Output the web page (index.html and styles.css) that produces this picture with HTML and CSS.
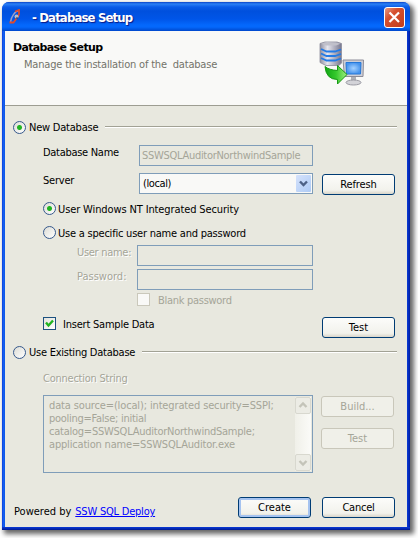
FILE: index.html
```html
<!DOCTYPE html>
<html lang="en">
<head>
<meta charset="utf-8">
<title>Database Setup</title>
<link rel="stylesheet" href="styles.css">
</head>
<body>
<main class="window">
  <header class="titlebar">
    <svg class="app-icon" width="14" height="16" viewBox="0 0 14 16"><path d="M1.500 13C2 8 6 2 10 1.500" fill="none" stroke="#9a9cc8" stroke-width="1.500"/><path d="M.5 13.500H4.500L7.500 9.500M6 2.500 10 1V5L8.500 8.500" fill="none" stroke="#e04a2c" stroke-width="1.800"/><circle cx="7.500" cy="7.500" r="2" fill="#b9bdc9"/><path d="M7 9h2" stroke="#333"/></svg>
    <h1>- Database Setup</h1>
    <button class="close" aria-label="Close"><svg width="21" height="21" viewBox="0 0 21 21"><path d="M5.500 5.500 15 15M15 5.500 5.500 15" stroke="#fff" stroke-width="2.200"/></svg></button>
  </header>
  <div class="client">
    <section class="banner">
      <div class="banner-text">
        <h2>Database Setup</h2>
        <p>Manage the installation of the&nbsp; database</p>
      </div>
      <svg class="banner-icon" width="46" height="46" viewBox="0 0 46 46">
        <defs>
          <linearGradient id="metal"><stop offset="0" stop-color="#8f8fa0"/><stop offset=".35" stop-color="#e6e6ee"/><stop offset="1" stop-color="#77778e"/></linearGradient>
          <linearGradient id="green"><stop offset="0" stop-color="#10a514"/><stop offset=".5" stop-color="#35c92c"/><stop offset="1" stop-color="#a2ee80"/></linearGradient>
          <radialGradient id="screen"><stop offset="0" stop-color="#a6d2ff"/><stop offset="1" stop-color="#4593ed"/></radialGradient>
        </defs>
        <path d="M1 2.500 6 1H18L22.500 2.500V22L20 24.500H7L1 21.500Z" fill="url(#metal)" stroke="#8b8b9b" stroke-width=".8"/>
        <path d="M2 2.800 7 1.500H17L21.500 2.800 17 4.500H7Z" fill="#c0c0ca"/>
        <path d="M2 8 7.500 10.500H16L22 8.500M2 12.500 7.500 15H16L22 13M2 17 7.500 19.500H16L22 17.500" fill="none" stroke="#247be5" stroke-width="1.800"/>
        <path d="M24 19H44.500L44 35.500H25.500Z" fill="#ceced6" stroke="#8d8d98"/>
        <path d="M27 21.500H42L41.500 33H27.500Z" fill="url(#screen)" stroke="#2678d8"/>
        <path d="M32 36h5v4h-5z" fill="#aeb0b6"/><ellipse cx="34.500" cy="41.500" rx="7.500" ry="2.500" fill="#d3d3d8" stroke="#9a9aa3"/>
        <path d="M6 25.500Q10 29 18.500 29.500V24.500L28 33.500 18.500 43V38.500Q7 38.500 6 25.500Z" fill="url(#green)" stroke="#179a14"/>
      </svg>
    </section>
    <form class="form">
      <div class="group-head">
        <i class="radio on"></i><span class="t-new">New Database</span><i class="rule"></i>
      </div>
      <div class="row name-row"><label class="t-name">Database Name</label><div class="field"><span class="t-sample">SSWSQLAuditorNorthwindSample</span></div></div>
      <div class="row server-row"><label class="t-server">Server</label><div class="field select"><span class="t-local">(local)</span><i class="drop"><svg width="15" height="17" viewBox="0 0 15 17"><path d="M4 6.500 7.500 10 11 6.500" fill="none" stroke="#4d6185" stroke-width="2.400"/></svg></i></div><button type="button" class="btn"><span class="t-refresh">Refresh</span></button></div>
      <div class="option nt"><i class="radio on"></i><span class="t-nt">User Windows NT Integrated Security</span></div>
      <div class="option specific"><i class="radio"></i><span class="t-specific">Use a specific user name and password</span></div>
      <div class="row cred user"><label class="t-user">User name:</label><div class="field"></div></div>
      <div class="row cred pass"><label class="t-pass">Password:</label><div class="field"></div></div>
      <div class="blank"><i class="check off"></i><span class="t-blank">Blank password</span></div>
      <div class="row insert"><i class="check"><svg width="11" height="11" viewBox="0 0 11 11"><path d="M2 4.500 4.500 7.500 9 2.500" fill="none" stroke="#21b421" stroke-width="2.400"/></svg></i><span class="t-insert">Insert Sample Data</span><button type="button" class="btn"><span class="t-test">Test</span></button></div>
      <div class="group-head existing">
        <i class="radio"></i><span class="t-existing">Use Existing Database</span><i class="rule"></i>
      </div>
      <label class="conn"><span class="t-conn">Connection String</span></label>
      <div class="conn-row">
        <div class="memo">
          <div class="memo-text"><div class="m1">data source=(local); integrated security=SSPI;</div><div class="m2">pooling=False; initial</div><div class="m3">catalog=SSWSQLAuditorNorthwindSample;</div><div class="m4">application name=SSWSQLAuditor.exe</div></div>
          <div class="scroll"><i><svg width="14" height="15" viewBox="0 0 14 15"><path d="M3.500 9 7 5.500 10.500 9" fill="none" stroke="#c4c4b9" stroke-width="2.400"/></svg></i><i><svg width="14" height="15" viewBox="0 0 14 15"><path d="M3.500 6 7 9.500 10.500 6" fill="none" stroke="#c4c4b9" stroke-width="2.400"/></svg></i></div>
        </div>
        <div class="side"><button type="button" class="btn disabled"><span class="t-build">Build...</span></button><button type="button" class="btn disabled"><span class="t-test">Test</span></button></div>
      </div>
      <footer class="foot"><span class="powered"><span class="t-powered">Powered by</span><a class="t-link" href="#">SSW SQL Deploy</a></span><button type="button" class="btn default"><span class="t-create">Create</span></button><button type="button" class="btn"><span class="t-cancel">Cancel</span></button></footer>
    </form>
  </div>
</main>
</body>
</html>
```

FILE: styles.css
```css
* { box-sizing: border-box; }
body {
  margin: 0;
  height: 538px;
  overflow: hidden;
  background: #fff;
  font: 11px/14px "DejaVu Sans Condensed", "DejaVu Sans", sans-serif;
  font-stretch: condensed;
  color: #000;
}
.window {
  width: 408px;
  height: 528px;
  margin: 2px;
  display: flex;
  flex-direction: column;
  border-radius: 7px 7px 0 0;
  background: linear-gradient(90deg, #0831d9 0, #1660f0 1px, #0d57ea 3px, #0d57ea 404px, #0a3ad8 405px, #001ea0 408px);
  box-shadow: 3px 3px 5px 1px rgba(0, 0, 0, .6);
}
.window::after { content: ""; height: 3px; flex: none; background: linear-gradient(#0a3ad8, #001a94); }
.titlebar {
  height: 29px;
  flex: none;
  display: flex;
  align-items: center;
  padding: 1px 5px 0 7px;
  border-radius: 7px 7px 0 0;
  background: linear-gradient(#0a43c8 0, #2b80f5 2px, #0a5be8 5px, #0050dd 9px, #0055e8 17px, #0468fc 23px, #0468fc 25px, #0048cc 29px);
}
.app-icon { flex: none; }
h1 {
  margin: 0 auto 0 9px;
  padding-top: 2px;
  font: bold 13px/18px "DejaVu Sans Condensed", sans-serif;
  font-stretch: condensed;
  letter-spacing: -.85px;
  white-space: nowrap;
  color: #fff;
  text-shadow: 1px 1px 1px #0a1883;
}
.close {
  width: 21px;
  height: 21px;
  padding: 0;
  border: 1px solid #fff;
  border-radius: 3px;
  background: linear-gradient(135deg, #e89a83, #d6502f 35%, #c03d1e);
}
.close svg { display: block; margin: -1px; }
.client { flex: 1; margin: 0 3px; background: #e8e8df; }
.banner {
  height: 75px;
  display: flex;
  justify-content: space-between;
  background: #f9f9f7;
  border-bottom: 1px solid #9d9d92;
}
.banner-text { padding: 10px 0 0 8px; }
h2 { margin: 0; font: bold 11px/14px "DejaVu Sans", sans-serif; letter-spacing: -.67px; }
.banner p { margin: 3px 0 0 11px; color: #73736a; letter-spacing: -.19px; }
.banner-icon { margin: 10px 42px 0 0; }

.form { padding: 14px 10px 0 8px; }
.form span, .form label, .form a { white-space: nowrap; }
.group-head { display: flex; align-items: center; height: 14px; }
.group-head span, .option span, .blank span { padding-top: 2px; }
.rule { flex: 1; height: 2px; margin-left: 7px; background: linear-gradient(#a2a295 50%, #fff 50%); }
.radio {
  width: 13px;
  height: 13px;
  flex: none;
  margin-right: 3px;
  border: 1px solid #36598c;
  border-radius: 50%;
  background: linear-gradient(135deg, #dcdcd5, #fff);
}
.radio.on { background: radial-gradient(circle, #21b421 0 2px, transparent 3px), linear-gradient(135deg, #dcdcd5, #fff); }
.row { display: flex; align-items: flex-start; padding-left: 30px; }
.row label { flex: none; width: 96px; padding-top: 1px; }
.field { width: 174px; height: 21px; flex: none; border: 1px solid #7f9db9; padding: 3px 2px; color: #a5a598; }
.name-row { margin-top: 11px; }
.server-row { margin-top: 7px; }
.select { display: flex; justify-content: space-between; padding: 1px; background: #f9f9f7; color: #000; }
.select span { padding: 2px 0 0 2px; }
.drop { width: 15px; height: 17px; border-radius: 1px; background: linear-gradient(135deg, #d5e2fb, #aecbf5); }
.drop svg { display: block; }
.btn {
  width: 73px;
  height: 21px;
  flex: none;
  padding: 1px 0 0;
  border: 1px solid #003c74;
  border-radius: 3px;
  background: linear-gradient(#fcfcfa, #f2f2ec 80%, #d9d5c9);
  font: inherit;
  color: #000;
}
.server-row .btn { margin: 1px 0 0 9px; }
.btn.default { box-shadow: inset 0 0 0 2px #a5c3f0; }
.btn.disabled { border-color: #c9c7ba; background: #f0f0e9; color: #a5a598; }
.option { display: flex; align-items: center; height: 13px; margin-left: 30px; }
.option .radio { margin-right: 2px; }
.nt { margin-top: 7px; }
.specific { margin-top: 11px; }
.cred label { width: 60px; color: #a5a598; text-shadow: 1px 1px #fff; }
.cred { padding-left: 64px; margin-top: 3px; }
.cred.user { margin-top: 6px; }
.cred .field { width: 176px; }
.blank { display: flex; align-items: center; height: 13px; margin: 3px 0 0 124px; color: #a5a598; }
.check { width: 13px; height: 13px; flex: none; border: 1px solid #1c5180; background: linear-gradient(135deg, #e2e2dc, #fff); }
.check svg { display: block; }
.check.off { border-color: #cac8bb; background: #f9f9f7; margin-right: 8px; }
.insert { margin-top: 11px; }
.insert > span { margin-left: 7px; padding-top: 1px; }
.insert .btn { margin: 0 2px 0 auto; }
.existing { margin-top: 7px; }
.conn { display: block; margin: 13px 0 0 30px; color: #a5a598; text-shadow: 1px 1px #fff; }
.conn-row { display: flex; margin: 9px 0 0 30px; }
.memo { width: 270px; height: 78px; display: flex; justify-content: space-between; border: 1px solid #7f9db9; padding: 1px; color: #a5a598; line-height: 13px; white-space: nowrap; }
.memo-text { padding: 2px 0 0 4px; width: 250px; flex: none; }
.scroll { width: 16px; display: flex; flex-direction: column; justify-content: space-between; background: linear-gradient(90deg, #f0f0e9, #fbfbf8); flex: none; }
.scroll i { height: 17px; border: 1px solid #d8d8cf; border-radius: 2px; background: #ecece5; }
.scroll svg { display: block; }
.side { display: flex; flex-direction: column; gap: 11px; margin: 1px 0 0 8px; }
.foot { display: flex; gap: 11px; margin: 24px 2px 0 1px; }
.powered { margin: 8px auto 0 0; display: flex; gap: 4px; }
.foot a { color: #00f; text-decoration: underline; }

/* Tracking tuned per caption */
.t-new, .t-server, .t-link, .t-cancel { letter-spacing: -.22px; }
.t-name, .t-sample, .t-user, .t-blank { letter-spacing: -.29px; }
.t-local { letter-spacing: -.4px; }
.t-nt { letter-spacing: -.12px; }
.t-specific, .t-insert { letter-spacing: -.22px; }
.t-existing, .t-conn, .m3 { letter-spacing: -.24px; }
.t-refresh, .m1 { letter-spacing: -.14px; }
.m2 { letter-spacing: -.27px; }
.m4 { letter-spacing: -.18px; }
```
